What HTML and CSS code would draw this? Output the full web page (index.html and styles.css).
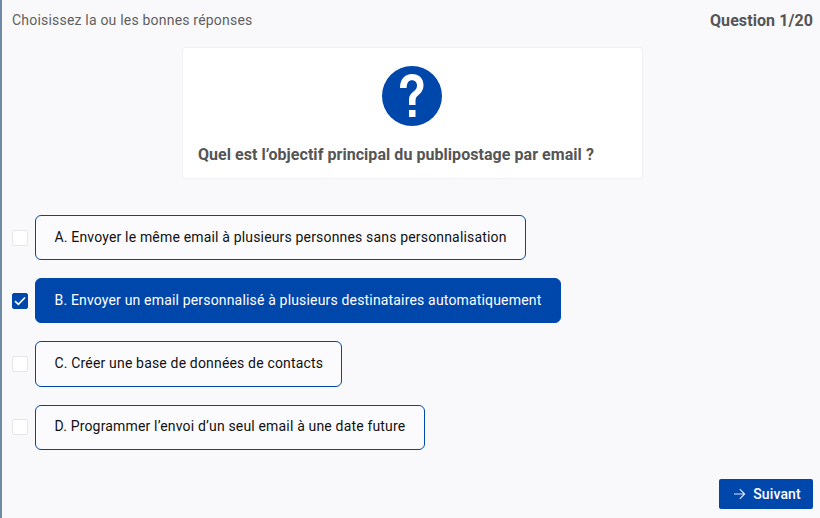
FILE: index.html
```html
<!DOCTYPE html>
<html lang="fr">
<head>
    <meta charset="UTF-8">
    <meta name="viewport" content="width=device-width, initial-scale=1.0">
    <title>Question 1/20</title>
    <link rel="stylesheet" href="styles.css">
</head>
<body>
    <div class="page">
        <div class="top-row">
            <p class="hint">Choisissez la ou les bonnes réponses</p>
            <p class="counter">Question 1/20</p>
        </div>

        <div class="question-card">
            <svg class="question-icon" width="60" height="60" viewBox="0 0 60 60">
                <circle cx="30" cy="30" r="30" fill="#0047ab"/>
                <path d="M18 22C18 13 23 8 30 8C37 8 41.500 12.500 41.500 19C41.500 24 39 27 36 29.500C34.500 30.800 33.500 32 33.500 35V39H27V34C27 30 28.500 28 31 26C33.500 24 35 22.500 35 19.500C35 16.300 33 14.200 30 14.200C26.800 14.200 24.800 16.500 24.600 22Z" fill="#fff"/>
                <rect x="27" y="44" width="6.500" height="7" fill="#fff"/>
            </svg>
            <h1 class="question-text">Quel est l’objectif principal du publipostage par email ?</h1>
        </div>

        <div class="options">
            <div class="option">
                <span class="check"></span>
                <div class="answer">A. Envoyer le même email à plusieurs personnes sans personnalisation</div>
            </div>
            <div class="option">
                <span class="check checked">
                    <svg width="12" height="10" viewBox="0 0 12 10"><path d="M1 5.200l3.400 3.200L11 1.500" fill="none" stroke="#fff" stroke-width="1.600"/></svg>
                </span>
                <div class="answer selected">B. Envoyer un email personnalisé à plusieurs destinataires automatiquement</div>
            </div>
            <div class="option">
                <span class="check"></span>
                <div class="answer">C. Créer une base de données de contacts</div>
            </div>
            <div class="option">
                <span class="check"></span>
                <div class="answer">D. Programmer l’envoi d’un seul email à une date future</div>
            </div>
        </div>

        <div class="bottom-row">
            <button class="next-button">
                <svg width="13" height="12" viewBox="0 0 13 12"><path d="M1 6h10.500M6.800 1.200L11.600 6l-4.800 4.800" fill="none" stroke="#dfe8f7" stroke-width="1.200"/></svg>
                Suivant
            </button>
        </div>
    </div>
</body>
</html>
```

FILE: styles.css
```css
html, body {
    height: 100%;
}
body {
    margin: 0;
    background: #f9f9fc;
    font-family: Roboto, Arial, sans-serif;
    color: #555;
    overflow: hidden;
}
.page {
    box-sizing: border-box;
    height: 518px;
    border-left: 2px solid #6e8aa5;
    padding: 0 7px 9px 10px;
    display: flex;
    flex-direction: column;
}
.top-row {
    display: flex;
    justify-content: space-between;
    align-items: center;
    height: 40px;
}
.hint {
    margin: 0;
    font-size: 14px;
    letter-spacing: 0.2px;
    color: #5f5f5f;
}
.counter {
    margin: 0;
    font-size: 16px;
    font-weight: 700;
    letter-spacing: 0.08px;
    color: #555;
}
.question-card {
    box-sizing: border-box;
    width: 461px;
    height: 132px;
    margin: 7px 0 0 170px;
    padding: 18px 15px 0;
    background: #fff;
    border: 1px solid #f0f0f4;
    border-radius: 3px;
}
.question-icon {
    display: block;
    margin: 0 0 0 184px;
}
.question-text {
    margin: 19px 0 0;
    font-size: 16px;
    line-height: 20px;
    font-weight: 700;
    letter-spacing: 0.05px;
    color: #555;
}
.options {
    display: flex;
    flex-direction: column;
    gap: 17.970px;
    margin-top: 36.050px;
}
.option {
    display: flex;
    align-items: center;
    gap: 7px;
}
.check {
    box-sizing: border-box;
    width: 16px;
    height: 16px;
    background: #fff;
    border: 1px solid #e6e6ea;
    border-radius: 2px;
    display: flex;
    align-items: center;
    justify-content: center;
}
.check.checked {
    background: #0047ab;
    border-color: #0047ab;
}
.answer {
    box-sizing: border-box;
    height: 45.200px;
    padding: 0 18.300px 2px 18.500px;
    display: flex;
    align-items: center;
    font-size: 14px;
    letter-spacing: 0.17px;
    color: #111;
    background: #fbfbfe;
    border: 1px solid #0047ab;
    border-radius: 6px;
}
.answer.selected {
    background: #0047ab;
    color: #fff;
}
.bottom-row {
    margin-top: auto;
    display: flex;
    justify-content: flex-end;
}
.next-button {
    width: 94px;
    height: 30px;
    display: flex;
    align-items: center;
    justify-content: center;
    gap: 7px;
    padding: 0 0 1px 2px;
    background: #0047ab;
    color: #fff;
    border: none;
    border-radius: 2px;
    font-family: Roboto, Arial, sans-serif;
    font-size: 14px;
    font-weight: 500;
    letter-spacing: 0.15px;
}
```
